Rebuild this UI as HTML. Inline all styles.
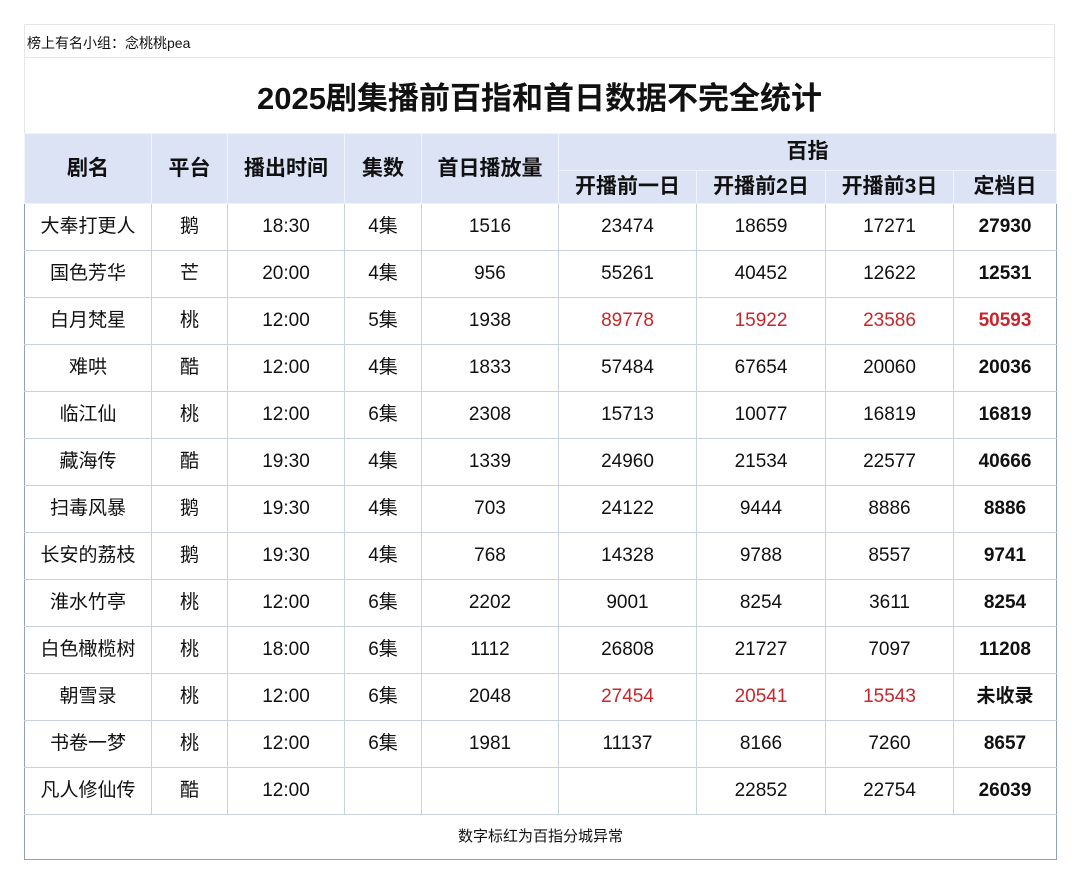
<!DOCTYPE html><html><head><meta charset="utf-8"><style>
body{margin:0;background:#fff;font-family:"Liberation Sans","Noto Sans CJK SC",sans-serif;color:#111}
.wrap{position:absolute;left:24px;top:24px;width:1031px}
.cap{height:32px;border:1px solid #e4e6ea;border-bottom:none;font-size:14px;line-height:36px;padding-left:2px;box-sizing:border-box;height:33px}
.title{height:76px;box-sizing:border-box;border:1px solid #e4e6ea;border-bottom:none;text-align:center;font-size:31px;font-weight:bold;line-height:82px}
table{border-collapse:collapse;table-layout:fixed;width:1032px}
td{border:1px solid #c9d1de;text-align:center;font-size:19px;height:46px;padding:0;line-height:44px;overflow:hidden}
tr.h td{background:#dbe3f5;font-weight:bold;font-size:21px;height:32px;line-height:30px;border-color:#f0f3fa}
tr.h td.big{height:66px;line-height:66px}
.r{color:#c8262b}
.b{font-weight:bold}
td:first-child{border-left:1px solid #8fa0c0}
td:last-child{border-right:1px solid #8fa0c0}
.foot td{height:44px;font-size:15px;line-height:40px;border-bottom:1px solid #8fa0c0}
</style></head><body><div class="wrap">
<div class="cap">榜上有名小组：念桃桃pea</div>
<div class="title">2025剧集播前百指和首日数据不完全统计</div>
<table>
<colgroup><col style="width:127px"><col style="width:76px"><col style="width:117px"><col style="width:77px"><col style="width:137px"><col style="width:138px"><col style="width:129px"><col style="width:128px"><col style="width:103px"></colgroup>
<tr class="h"><td rowspan="2" class="big">剧名</td><td rowspan="2" class="big">平台</td><td rowspan="2" class="big">播出时间</td><td rowspan="2" class="big">集数</td><td rowspan="2" class="big">首日播放量</td><td colspan="4" style="line-height:36px">百指</td></tr>
<tr class="h"><td>开播前一日</td><td>开播前2日</td><td>开播前3日</td><td>定档日</td></tr>
<tr><td>大奉打更人</td><td>鹅</td><td>18:30</td><td>4集</td><td>1516</td><td>23474</td><td>18659</td><td>17271</td><td class="b">27930</td></tr>
<tr><td>国色芳华</td><td>芒</td><td>20:00</td><td>4集</td><td>956</td><td>55261</td><td>40452</td><td>12622</td><td class="b">12531</td></tr>
<tr><td>白月梵星</td><td>桃</td><td>12:00</td><td>5集</td><td>1938</td><td class="r">89778</td><td class="r">15922</td><td class="r">23586</td><td class="b r">50593</td></tr>
<tr><td>难哄</td><td>酷</td><td>12:00</td><td>4集</td><td>1833</td><td>57484</td><td>67654</td><td>20060</td><td class="b">20036</td></tr>
<tr><td>临江仙</td><td>桃</td><td>12:00</td><td>6集</td><td>2308</td><td>15713</td><td>10077</td><td>16819</td><td class="b">16819</td></tr>
<tr><td>藏海传</td><td>酷</td><td>19:30</td><td>4集</td><td>1339</td><td>24960</td><td>21534</td><td>22577</td><td class="b">40666</td></tr>
<tr><td>扫毒风暴</td><td>鹅</td><td>19:30</td><td>4集</td><td>703</td><td>24122</td><td>9444</td><td>8886</td><td class="b">8886</td></tr>
<tr><td>长安的荔枝</td><td>鹅</td><td>19:30</td><td>4集</td><td>768</td><td>14328</td><td>9788</td><td>8557</td><td class="b">9741</td></tr>
<tr><td>淮水竹亭</td><td>桃</td><td>12:00</td><td>6集</td><td>2202</td><td>9001</td><td>8254</td><td>3611</td><td class="b">8254</td></tr>
<tr><td>白色橄榄树</td><td>桃</td><td>18:00</td><td>6集</td><td>1112</td><td>26808</td><td>21727</td><td>7097</td><td class="b">11208</td></tr>
<tr><td>朝雪录</td><td>桃</td><td>12:00</td><td>6集</td><td>2048</td><td class="r">27454</td><td class="r">20541</td><td class="r">15543</td><td class="b">未收录</td></tr>
<tr><td>书卷一梦</td><td>桃</td><td>12:00</td><td>6集</td><td>1981</td><td>11137</td><td>8166</td><td>7260</td><td class="b">8657</td></tr>
<tr><td>凡人修仙传</td><td>酷</td><td>12:00</td><td></td><td></td><td></td><td>22852</td><td>22754</td><td class="b">26039</td></tr>
<tr class="foot"><td colspan="9">数字标红为百指分城异常</td></tr>
</table></div></body></html>
